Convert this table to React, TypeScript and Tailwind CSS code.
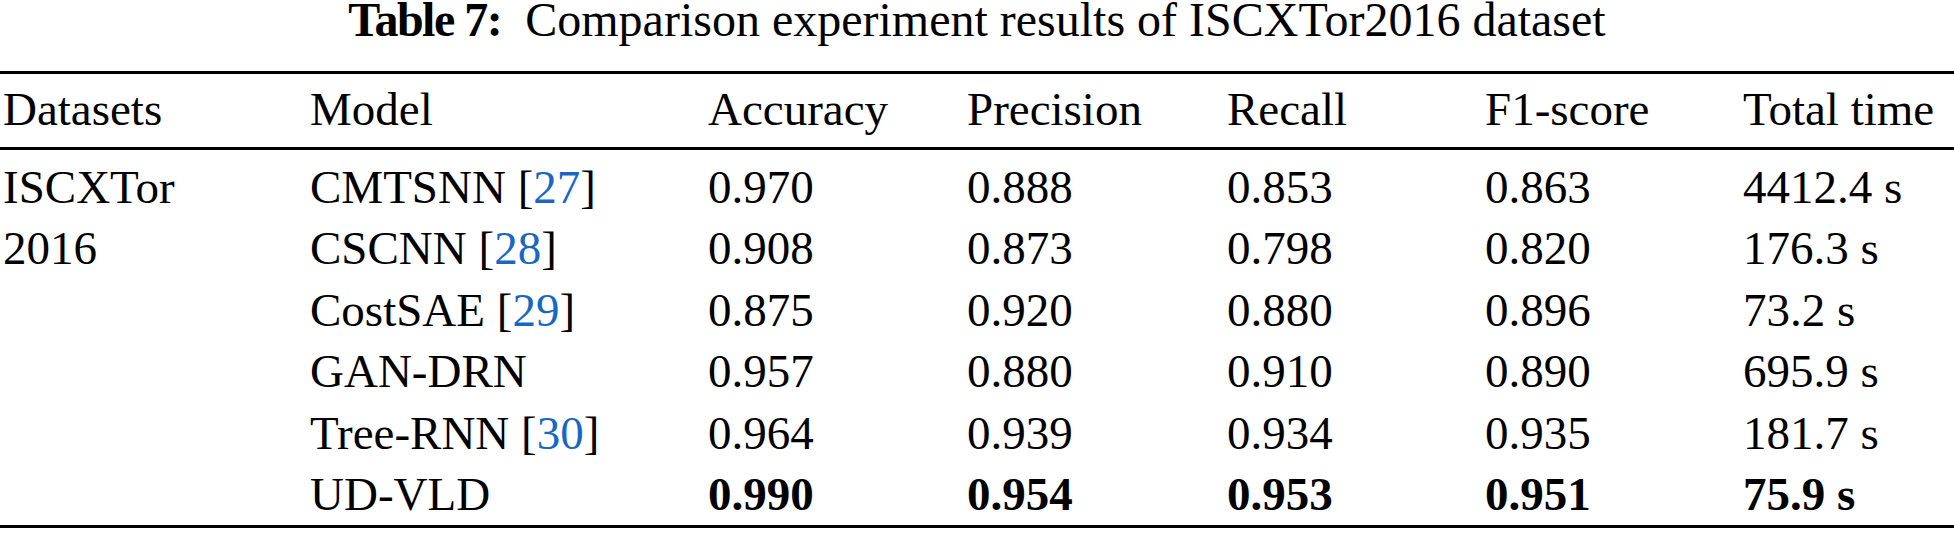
const rows = [
  { ds: "ISCXTor", model: "CMTSNN", ref: "27", vals: ["0.970", "0.888", "0.853", "0.863", "4412.4 s"] },
  { ds: "2016", model: "CSCNN", ref: "28", vals: ["0.908", "0.873", "0.798", "0.820", "176.3 s"] },
  { ds: "", model: "CostSAE", ref: "29", vals: ["0.875", "0.920", "0.880", "0.896", "73.2 s"] },
  { ds: "", model: "GAN-DRN", ref: "", vals: ["0.957", "0.880", "0.910", "0.890", "695.9 s"] },
  { ds: "", model: "Tree-RNN", ref: "30", vals: ["0.964", "0.939", "0.934", "0.935", "181.7 s"] },
  { ds: "", model: "UD-VLD", ref: "", vals: ["0.990", "0.954", "0.953", "0.951", "75.9 s"], best: true },
];

const cols = "grid grid-cols-[307px_398px_259px_260px_258px_258px_1fr] pl-[3px]";

export default function App() {
  return (
    <div className="w-[1954px] h-[533px] bg-white text-black font-[family-name:'Liberation_Serif',serif] text-[47px] overflow-hidden">
      <div className="text-center text-[48px] leading-[40px] whitespace-nowrap">
        <span className="font-bold tracking-[-1.5px]">Table 7:</span>
        <span className="ml-[24px]">Comparison experiment results of ISCXTor2016 dataset</span>
      </div>

      <div className="mt-[31px] h-[3px] bg-black" />

      <div className={`${cols} leading-[61px] pt-[5px] pb-[7px]`}>
        <div>Datasets</div>
        <div>Model</div>
        <div>Accuracy</div>
        <div>Precision</div>
        <div>Recall</div>
        <div>F1-score</div>
        <div>Total time</div>
      </div>

      <div className="h-[3px] bg-black" />

      <div className="pt-[7px]">
        {rows.map((r) => (
          <div key={r.model} className={`${cols} leading-[61.4px] whitespace-nowrap`}>
            <div>{r.ds}</div>
            <div>
              {r.model}
              {r.ref && (
                <>
                  {" ["}
                  <span className="text-[#1a67c2]">{r.ref}</span>
                  {"]"}
                </>
              )}
            </div>
            {r.vals.map((v, i) => (
              <div key={i} className={r.best ? "font-bold" : ""}>
                {v}
              </div>
            ))}
          </div>
        ))}
      </div>

      <div className="h-[3px] bg-black" />
    </div>
  );
}
